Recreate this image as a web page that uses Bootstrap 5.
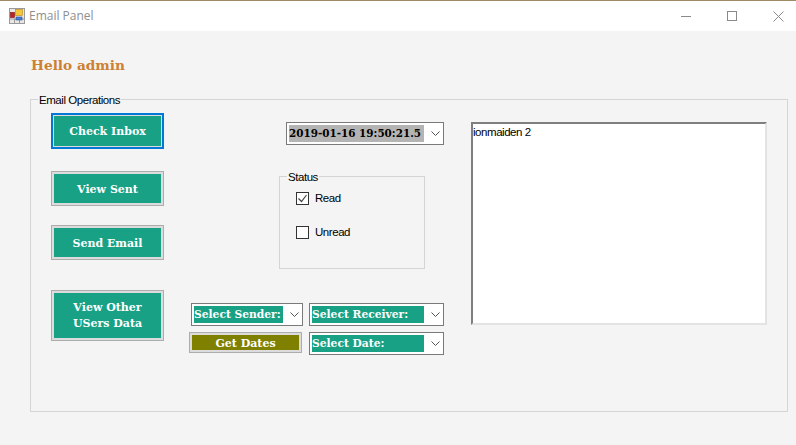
<!DOCTYPE html>
<html lang="en">
<head>
    <meta charset="UTF-8" />
    <meta name="viewport" content="width=device-width, initial-scale=1" />
    <title>Email Panel</title>
    <link href="https://cdn.jsdelivr.net/npm/bootstrap@5.3.0/dist/css/bootstrap.min.css" rel="stylesheet" />
    <style>
        html, body {
            height: 100%;
        }

        body {
            background: #f4f4f4;
            font-family: "Liberation Sans", Arial, sans-serif;
            font-size: 11.5px;
            letter-spacing: -0.45px;
            color: #000;
            overflow: hidden;
        }

        .title-bar {
            height: 31px;
            background: #fff;
            border-top: 1px solid #a08c64;
            padding-left: 9px;
        }

        .title-text {
            margin-left: 4px;
            font-family: "Open Sans", sans-serif;
            font-size: 12px;
            letter-spacing: 0;
            color: #8f8f8f;
        }

        .win-btn {
            width: 46px;
            height: 30px;
        }

        .win-btns {
            margin-right: -5px;
        }

        .panel-body {
            padding: 0 8px 0 30px;
        }

        .hello {
            margin: 25px 0 0 1px;
            height: 35px;
            font-family: "DejaVu Serif", serif;
            font-size: 13.7px;
            font-weight: 700;
            letter-spacing: 0;
            line-height: 18px;
            color: #cd7f32;
        }

        .group-main {
            height: 321px;
            border: 1px solid #d4d4d4;
            padding: 6px 20px 0;
        }

        .group-main legend,
        .group-status legend {
            float: none;
            width: auto;
            margin: 0;
            padding: 2px 1px 0;
            font-size: 11.5px;
            line-height: 14px;
        }

        .group-main legend {
            margin-left: -13px;
        }

        .group-status legend {
            margin-left: -9px;
        }

        .left-col {
            width: 113px;
        }

        .op-btn {
            display: block;
            width: 113px;
            height: 35px;
            padding: 2px 0 0;
            border: 1px solid #adadad;
            border-radius: 0;
            box-shadow: inset 0 0 0 2px #dcdcdc;
            background: #18a185;
            color: #fff;
            font-family: "DejaVu Serif", serif;
            font-size: 11px;
            font-weight: 700;
            letter-spacing: 0;
            line-height: 16px;
        }

        .op-btn:hover {
            background: #18a185;
            color: #fff;
        }

        .op-focus {
            height: 36px;
            border: 2px solid #0078d7;
            box-shadow: inset 0 0 0 1px #dcdcdc;
        }

        .op-tall {
            height: 51px;
            padding-top: 0;
        }

        .op-olive {
            width: 113px;
            height: 21px;
            background: #808000;
        }

        .op-olive:hover {
            background: #808000;
        }

        .gap-sent {
            margin-top: 22px;
        }

        .gap-send {
            margin-top: 19px;
        }

        .gap-other {
            margin-top: 30px;
        }

        .mid-col {
            width: 255px;
            margin-left: 25px;
        }

        .combo {
            height: 23px;
            padding: 2px;
            background: #fff;
            border: 1px solid #7a7a7a;
        }

        .combo-date {
            width: 158px;
            margin: 9px 0 0 97px;
        }

        .combo-label {
            flex: none;
            height: 17px;
            font-family: "DejaVu Serif", serif;
            font-size: 10.7px;
            font-weight: 700;
            letter-spacing: 0;
            line-height: 17px;
            white-space: nowrap;
            color: #fff;
            background: #18a185;
        }

        .combo-date .combo-label {
            width: 135px;
            font-size: 10.4px;
            color: #000;
            background: #b4b4b4;
        }

        .combo-sender {
            width: 112px;
            margin-left: 2px;
        }

        .combo-sender .combo-label {
            width: 89px;
        }

        .combo-receiver {
            width: 135px;
            margin-left: 6px;
        }

        .combo-receiver .combo-label {
            width: 112px;
        }

        .combo-arrow {
            flex-grow: 1;
            padding-left: 5px;
        }

        .group-status {
            width: 146px;
            height: 101px;
            margin: 23px 0 0 90px;
            border: 1px solid #d4d4d4;
            padding: 0 0 0 16px;
        }

        .check-row {
            height: 14px;
            line-height: 14px;
        }

        .check-row + .check-row {
            margin-top: 20px;
        }

        .check-box {
            flex: none;
            width: 13px;
            height: 13px;
            margin-right: 6px;
            background: #fff;
            border: 1px solid #333;
        }

        .status-list {
            padding-top: 7px;
        }

        .combo-rows {
            margin-top: 34px;
        }

        .row-second {
            margin-top: 6px;
        }

        .mail-list {
            width: 296px;
            height: 203px;
            margin: 9px 0 0 27px;
            padding: 1px 0 0;
            background: #fff;
            border: 2px solid #7f7f7f;
            border-right-color: #e3e3e3;
            border-bottom-color: #e3e3e3;
            line-height: 14px;
        }
    </style>
</head>
<body>
    <div class="title-bar d-flex align-items-center">
        <svg width="16" height="16" viewBox="0 0 16 16" aria-hidden="true">
            <rect x="0.5" y="0.5" width="15" height="15" fill="#e8e8e8" stroke="#9a9a9a" />
            <path d="M0.5 11H15.5M5.5 11V15.5M10.5 11V15.5" stroke="#9a9a9a" fill="none" />
            <rect x="6.5" y="1.5" width="7" height="6" fill="#f5c83c" stroke="#b8860b" stroke-width="0.6" />
            <rect x="1.5" y="4.5" width="4" height="5" fill="#c81e1e" stroke="#7a1010" stroke-width="0.6" />
            <rect x="7" y="9" width="6" height="3" fill="#4a7fd8" stroke="#2a4f98" stroke-width="0.6" />
        </svg>
        <span class="title-text">Email Panel</span>
        <div class="win-btns ms-auto d-flex">
            <div class="win-btn d-flex align-items-center justify-content-center">
                <svg width="10" height="10" viewBox="0 0 10 10" aria-hidden="true"><path d="M0 5.5H10" stroke="#8a8a8a" fill="none" /></svg>
            </div>
            <div class="win-btn d-flex align-items-center justify-content-center">
                <svg width="10" height="10" viewBox="0 0 10 10" aria-hidden="true"><rect x="0.5" y="0.5" width="9" height="9" stroke="#8a8a8a" fill="none" /></svg>
            </div>
            <div class="win-btn d-flex align-items-center justify-content-center">
                <svg width="11" height="11" viewBox="0 0 11 11" aria-hidden="true"><path d="M0.5 0.5L10.5 10.5M10.5 0.5L0.5 10.5" stroke="#8a8a8a" fill="none" /></svg>
            </div>
        </div>
    </div>

    <div class="panel-body">
        <div class="hello">Hello admin</div>

        <fieldset class="group-main">
            <legend>Email Operations</legend>
            <div class="d-flex align-items-start">
                <div class="left-col">
                    <button type="button" class="btn op-btn op-focus">Check Inbox</button>
                    <button type="button" class="btn op-btn gap-sent">View Sent</button>
                    <button type="button" class="btn op-btn gap-send">Send Email</button>
                    <button type="button" class="btn op-btn op-tall gap-other">View Other<br />USers Data</button>
                </div>

                <div class="mid-col">
                    <div class="combo combo-date d-flex">
                        <div class="combo-label">2019-01-16 19:50:21.5</div>
                        <div class="combo-arrow d-flex align-items-center justify-content-center">
                            <svg width="9" height="5" viewBox="0 0 9 5" aria-hidden="true"><path d="M0.5 0.5L4.5 4.5L8.5 0.5" stroke="#555" fill="none" /></svg>
                        </div>
                    </div>

                    <fieldset class="group-status">
                        <legend>Status</legend>
                        <div class="status-list">
                            <div class="check-row d-flex align-items-center">
                                <span class="check-box d-flex align-items-center justify-content-center">
                                    <svg width="11" height="11" viewBox="0 0 11 11" aria-hidden="true"><path d="M1.5 5.5L4.5 8.5L9.5 2" stroke="#444" stroke-width="1.2" fill="none" /></svg>
                                </span>
                                <span>Read</span>
                            </div>
                            <div class="check-row d-flex align-items-center">
                                <span class="check-box"></span>
                                <span>Unread</span>
                            </div>
                        </div>
                    </fieldset>

                    <div class="combo-rows">
                        <div class="d-flex">
                            <div class="combo combo-sender d-flex">
                                <div class="combo-label">Select Sender:</div>
                                <div class="combo-arrow d-flex align-items-center justify-content-center">
                                    <svg width="9" height="5" viewBox="0 0 9 5" aria-hidden="true"><path d="M0.5 0.5L4.5 4.5L8.5 0.5" stroke="#555" fill="none" /></svg>
                                </div>
                            </div>
                            <div class="combo combo-receiver d-flex">
                                <div class="combo-label">Select Receiver:</div>
                                <div class="combo-arrow d-flex align-items-center justify-content-center">
                                    <svg width="9" height="5" viewBox="0 0 9 5" aria-hidden="true"><path d="M0.5 0.5L4.5 4.5L8.5 0.5" stroke="#555" fill="none" /></svg>
                                </div>
                            </div>
                        </div>
                        <div class="d-flex row-second">
                            <button type="button" class="btn op-btn op-olive">Get Dates</button>
                            <div class="combo combo-receiver d-flex ms-auto">
                                <div class="combo-label">Select Date:</div>
                                <div class="combo-arrow d-flex align-items-center justify-content-center">
                                    <svg width="9" height="5" viewBox="0 0 9 5" aria-hidden="true"><path d="M0.5 0.5L4.5 4.5L8.5 0.5" stroke="#555" fill="none" /></svg>
                                </div>
                            </div>
                        </div>
                    </div>
                </div>

                <div class="mail-list">ionmaiden 2</div>
            </div>
        </fieldset>
    </div>

    <script src="https://cdn.jsdelivr.net/npm/bootstrap@5.3.0/dist/js/bootstrap.bundle.min.js"></script>
</body>
</html>
